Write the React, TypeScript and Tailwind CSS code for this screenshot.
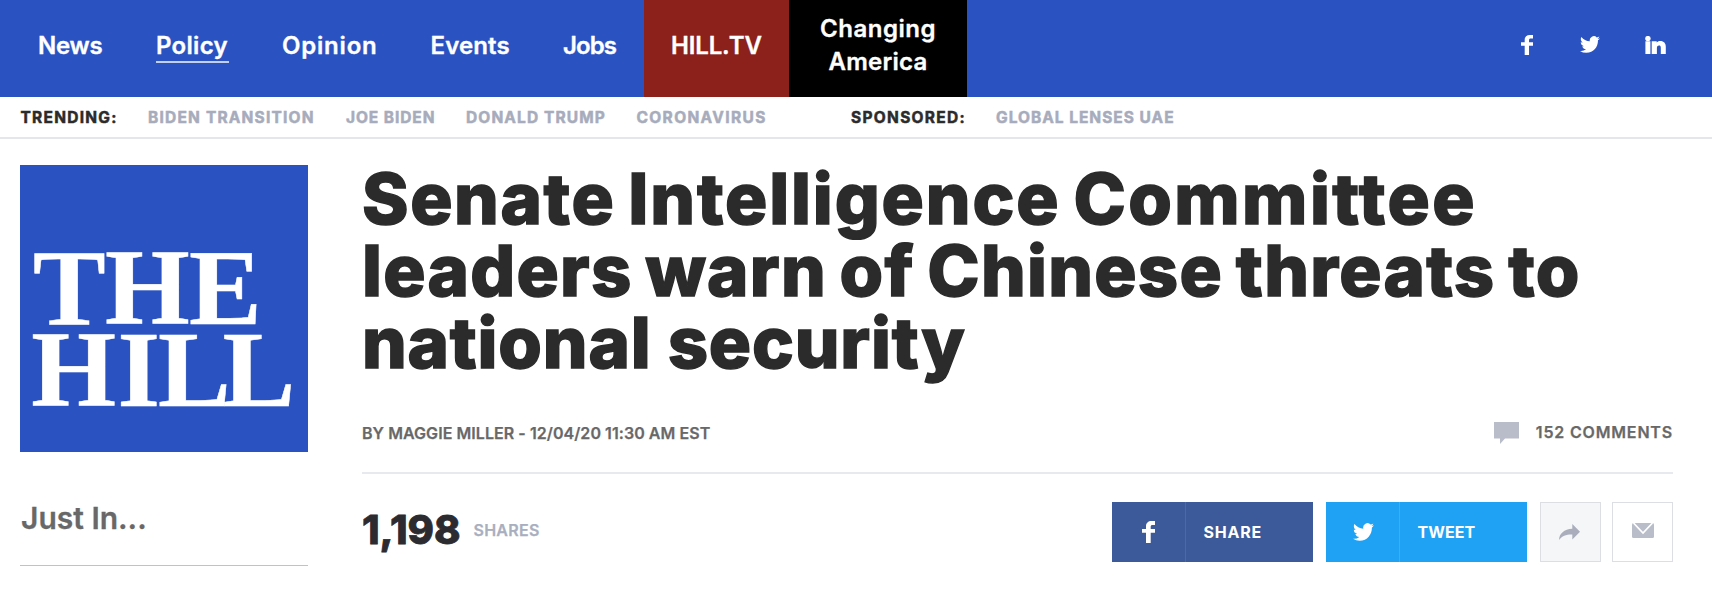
import type { ReactNode } from "react";

const TWITTER =
  "M23.95 4.57a10 10 0 0 1-2.82.77 4.96 4.96 0 0 0 2.16-2.72c-.95.55-2 .95-3.13 1.18a4.92 4.92 0 0 0-8.38 4.48C7.69 8.1 4.07 6.13 1.64 3.16a4.82 4.82 0 0 0-.67 2.48c0 1.7.87 3.21 2.19 4.1a4.9 4.9 0 0 1-2.23-.62v.06a4.92 4.92 0 0 0 3.95 4.83 5 5 0 0 1-2.21.08 4.94 4.94 0 0 0 4.6 3.42A9.87 9.87 0 0 1 0 19.54a13.99 13.99 0 0 0 7.55 2.21c9.05 0 14-7.5 14-13.98 0-.21 0-.42-.02-.63a9.94 9.94 0 0 0 2.42-2.57z";

function FacebookIcon({ className }: { className: string }) {
  return (
    <svg className={className} viewBox="0 0 13 22" preserveAspectRatio="none" fill="currentColor">
      <path d="M4 22V11.700H0V7.900h4V5.400C4 1.900 6.200 0 9.500 0H13v3.900h-2.400C9.200 3.900 8.700 4.500 8.700 5.700v2.200H13v3.800H8.700V22z" />
    </svg>
  );
}

function TwitterIcon({ className }: { className: string }) {
  return (
    <svg className={className} viewBox="0 2 24 20" preserveAspectRatio="none" fill="currentColor">
      <path d={TWITTER} />
    </svg>
  );
}

function LinkedinIcon({ className }: { className: string }) {
  return (
    <svg className={className} viewBox="0 0 21 18" fill="currentColor">
      <circle cx="2.900" cy="2.600" r="2.700" />
      <path d="M.4 5.200h5V18H.4zM6.700 5.200h5v1.400C12.400 5.500 13.500 5 15.200 5c3.700 0 5.600 2.200 5.600 5.800V18h-5v-6.200c0-1.700-.6-2.300-1.800-2.300s-2.100.8-2.100 2.500V18H6.700z" />
    </svg>
  );
}

function Logo() {
  return (
    <svg
      className="block h-[287px] w-[288px] bg-[#2a52c1]"
      viewBox="0 0 288 287"
      fill="#fff"
      stroke="#fff"
      strokeWidth="0.5"
      fontFamily="'Liberation Serif', serif"
      fontWeight="700"
      fontSize="109"
    >
      <text y="159" x="13 85 169">THE</text>
      <text y="240.500" x="11.300 97.500 138 202.500">HILL</text>
    </svg>
  );
}

function NavItem({ className, children }: { className: string; children: ReactNode }) {
  return (
    <a href="#" className={`flex h-full items-center leading-[33.5px] whitespace-nowrap ${className}`}>
      {children}
    </a>
  );
}

function Header() {
  return (
    <header className="flex h-[97px] items-center bg-[#2a52c1] pl-[38px] text-[24px] font-semibold text-white [-webkit-text-stroke:0.35px_currentColor]">
      <NavItem className="w-[118px] pb-[5px] tracking-[-0.23px]">News</NavItem>
      <NavItem className="w-[126px] pb-[5px]">
        <span className="relative tracking-[0.3px]">
          Policy
          <span className="absolute left-0 -right-px top-[32px] h-[1.500px] bg-[#c3cfef]" />
        </span>
      </NavItem>
      <NavItem className="w-[148.500px] pb-[5px] tracking-[0.8px]">Opinion</NavItem>
      <NavItem className="w-[132.500px] pb-[5px] tracking-[0.14px]">Events</NavItem>
      <NavItem className="w-[81px] pb-[5px] tracking-[-0.9px]">Jobs</NavItem>
      <NavItem className="w-[145px] bg-[#8c211c] pb-[5px] pl-[27px] tracking-[-0.15px]">HILL.TV</NavItem>
      <NavItem className="w-[178px] justify-center bg-black pb-[7px] text-center">
        <span>
          <span className="block tracking-[0.5px]">Changing</span>
          <span className="block tracking-[0.25px]">America</span>
        </span>
      </NavItem>
      <div className="ml-auto flex items-center pb-[8px]">
        <FacebookIcon className="mr-[47px] h-5 w-3" />
        <TwitterIcon className="mr-[45px] h-[17px] w-5" />
        <LinkedinIcon className="mr-[46.500px] h-[18px] w-[21px]" />
      </div>
    </header>
  );
}

function Trending() {
  return (
    <div className="flex h-[42px] items-center border-b-2 border-[#e4e6eb] pt-px pl-[20.500px] text-[15.500px] font-bold whitespace-nowrap text-[#a7acbc] [-webkit-text-stroke:0.5px_currentColor]">
      <span className="w-[127.500px] tracking-[1.25px] text-[#2b2b2b]">TRENDING:</span>
      <span className="w-[198px] tracking-[1.2px]">BIDEN TRANSITION</span>
      <span className="w-[120px] tracking-[0.92px]">JOE BIDEN</span>
      <span className="w-[170.500px] tracking-[1.12px]">DONALD TRUMP</span>
      <span className="w-[214.500px] tracking-[1.35px]">CORONAVIRUS</span>
      <span className="w-[145px] tracking-[1.3px] text-[#2b2b2b]">SPONSORED:</span>
      <span className="tracking-[1px]">GLOBAL LENSES UAE</span>
    </div>
  );
}

export default function App() {
  return (
    <div className="h-[589px] overflow-hidden bg-white font-['Inter',sans-serif]">
      <Header />
      <Trending />
      <div className="flex pl-5 pt-[26px]">
        <aside className="w-[288px] shrink-0">
          <Logo />
          <h2 className="mt-[46px] h-[68px] border-b border-[#bfc1cc] pl-px text-[30px] leading-[40px] font-semibold text-[#686868] [-webkit-text-stroke:0.3px_currentColor]">
            Just In...
          </h2>
        </aside>
        <main className="ml-[54px] w-[1311px]">
          <h1 className="-mt-0.5 text-[70.500px] leading-[72px] font-extrabold whitespace-nowrap text-[#2b2b2b] [-webkit-text-stroke:1.4px_currentColor]">
            <span className="block tracking-[1.6px] [word-spacing:-4px]">
              Senate <span className="tracking-[1.850px]">Intelligence</span>{" "}
              <span className="tracking-[2.4px]">Committee</span>
            </span>
            <span className="block tracking-[1.250px] [word-spacing:-4px]">leaders warn of Chinese threats to</span>
            <span className="block tracking-[0.8px]">national security</span>
          </h1>
          <div className="flex h-[93px] justify-between text-[16px] leading-[24px] font-semibold text-[#686868]">
            <p className="mt-[42px] tracking-[0.060px] [-webkit-text-stroke:0.25px_currentColor]">
              BY MAGGIE MILLER - 12/04/20 11:30 AM EST
            </p>
            <p className="mt-[41px] flex">
              <svg className="mr-[17px] mt-[2px] h-[22px] w-[25px]" viewBox="0 0 25 22" fill="#b9bdca">
                <path d="M0 0h25v16.500H11L6 22v-5.500H0z" />
              </svg>
              <span className="tracking-[0.83px] [-webkit-text-stroke:0.25px_currentColor]">152 COMMENTS</span>
            </p>
          </div>
          <div className="flex h-[90px] items-end border-t-2 border-[#e8e9ee]">
            <div className="mb-[2px] flex h-[60px] items-center">
              <span className="text-[40px] leading-[54px] font-extrabold tracking-[-0.05px] text-[#2b2b30] [-webkit-text-stroke:0.8px_currentColor]">
                1,198
              </span>
              <span className="ml-[13px] text-[16px] font-semibold tracking-[0.25px] text-[#a9afbf] [-webkit-text-stroke:0.25px_currentColor]">
                SHARES
              </span>
            </div>
            <div className="ml-auto flex h-[60px] text-[16px] font-bold text-white">
              <a href="#" className="flex w-[201px] items-center bg-[#3c5a99]">
                <span className="flex h-full w-[73.500px] items-center justify-center border-r border-[#4e69a2]">
                  <FacebookIcon className="h-[22px] w-[13px]" />
                </span>
                <span className="ml-[18px] tracking-[0.78px]">SHARE</span>
              </a>
              <a href="#" className="ml-[13px] flex w-[201px] items-center bg-[#1fa1f4]">
                <span className="flex h-full w-[73.500px] items-center justify-center border-r border-[#3baef6]">
                  <TwitterIcon className="ml-0.5 h-[18px] w-[21px]" />
                </span>
                <span className="ml-[18px] tracking-[0.080px]">TWEET</span>
              </a>
              <a
                href="#"
                className="ml-[13px] flex w-[61px] items-center justify-center border-[1.500px] border-[#dcdee4] bg-[#f5f6f8]"
              >
                <svg className="-ml-0.5 h-4 w-[21px]" viewBox="0 0 21 16" fill="#a9adbc">
                  <path d="M0 16C.3 9.500 5 5.200 13.300 4.700V0L21 7.700 13.300 15.500v-5C7.500 10.300 3 11.800 0 16z" />
                </svg>
              </a>
              <a
                href="#"
                className="ml-[11px] flex w-[61px] items-center justify-center border-[1.500px] border-[#dcdee6] bg-white"
              >
                <svg className="mb-1 h-[15px] w-[22px]" viewBox="0 0 22 15" fill="#b9bdca">
                  <rect width="22" height="15" rx="1.500" />
                  <path d="M1.500 0L11 10 20.500 0" fill="none" stroke="#fff" strokeWidth="1.700" />
                </svg>
              </a>
            </div>
          </div>
        </main>
      </div>
    </div>
  );
}
